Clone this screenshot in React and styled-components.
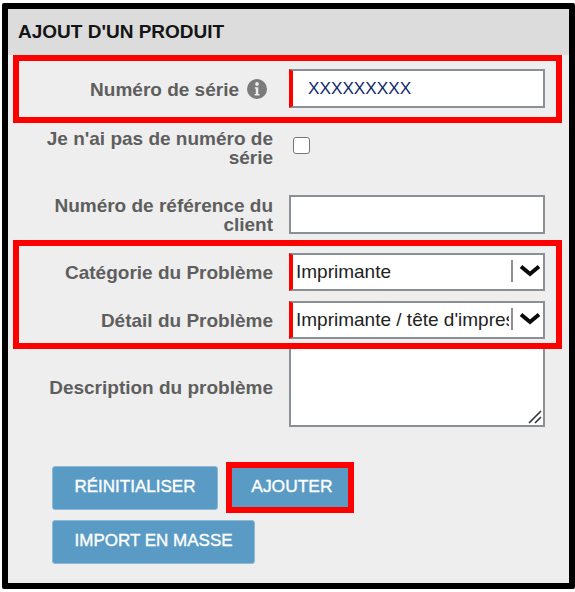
import React from "react";
import styled, { createGlobalStyle } from "styled-components";

const GlobalStyle = createGlobalStyle`
  html, body {
    margin: 0;
    padding: 0;
    background: #fff;
  }
  body {
    padding: 3px 0 0 2px;
    font-family: "Liberation Sans", Arial, sans-serif;
  }
`;

const Panel = styled.div`
  box-sizing: border-box;
  width: 573px;
  height: 586px;
  border: 6px solid #000;
  border-radius: 2px;
  background: #eee;
`;

const Header = styled.h2`
  box-sizing: border-box;
  height: 46px;
  margin: 0;
  padding: 12px 0 0 10px;
  background: #dcdcdc;
  color: #141414;
  font-size: 19px;
  line-height: 21px;
  font-weight: 700;
`;

const Form = styled.form`
  padding: 0 24px 0 33px;
`;

const Highlight = styled.div`
  position: relative;
  z-index: 1;
  margin: ${props => props.$top || 0}px -17px 0 -28px;
  padding: ${props => props.$padding};
  border: 6px solid #f00;
  pointer-events: none;
`;

const Row = styled.div`
  display: grid;
  grid-template-columns: 232px 256px;
  column-gap: 16px;
  align-items: ${props => props.$align || "center"};
  margin-top: ${props => props.$top || 0}px;
`;

const Label = styled.label`
  display: flex;
  justify-content: flex-end;
  align-items: center;
  gap: 8px;
  padding-top: ${props => props.$pad || 0}px;
  color: #5e5e5e;
  font-size: 19px;
  line-height: 19px;
  font-weight: 700;
  text-align: right;
`;

const LabelWithIcon = styled(Label)`
  margin-right: 6px;
  padding-top: 1px;
`;

const TextInput = styled.input`
  box-sizing: border-box;
  width: 256px;
  height: 39px;
  padding: 0 15px;
  border: 2px solid #8b9097;
  border-left: ${props => (props.$required ? "4px solid #f00" : "2px solid #8b9097")};
  border-radius: 0;
  background: #fff;
  color: #10296b;
  font-family: inherit;
  font-size: 17.2px;
  outline: none;
`;

const Check = styled.input`
  appearance: none;
  box-sizing: border-box;
  width: 17px;
  height: 17px;
  margin: 9px 0 0 4px;
  border: 1.5px solid #767676;
  border-radius: 3px;
  background: #fff;
`;

const Select = styled.div`
  box-sizing: border-box;
  display: flex;
  align-items: center;
  width: 256px;
  height: 38px;
  border: 2px solid #8b9097;
  border-left: 4px solid #f00;
  background: #fff;
`;

const SelectValue = styled.span`
  flex: 1;
  min-width: 0;
  margin: 0 2px 0 3px;
  overflow: hidden;
  color: #222;
  font-size: 19px;
  white-space: nowrap;
`;

const SelectCaret = styled.span`
  display: flex;
  align-items: center;
  width: 32px;
  height: 22px;
  margin-bottom: 3px;
  border-left: 2px solid #8b9097;
  padding-left: 6px;
  box-sizing: border-box;
`;

const AreaWrap = styled.div`
  position: relative;
  width: 256px;
  height: 80px;
  margin-top: -2px;
`;

const Area = styled.textarea`
  box-sizing: border-box;
  display: block;
  width: 100%;
  height: 100%;
  border: 2px solid #8b9097;
  border-radius: 0;
  background: #fff;
  resize: none;
  outline: none;
`;

const Grip = styled.svg`
  position: absolute;
  right: 3px;
  bottom: 3px;
`;

const Actions = styled.div`
  display: flex;
  flex-direction: column;
  align-items: flex-start;
  gap: 7px;
  margin: 35px 0 0 11px;
`;

const ButtonRow = styled.div`
  display: flex;
  align-items: center;
  gap: 8px;
`;

const Button = styled.button`
  box-sizing: border-box;
  height: 44px;
  padding: 0 21.5px 2px;
  border: 1px solid #8db9d6;
  border-radius: 3px;
  background: #5a9bc5;
  color: #fff;
  font-family: inherit;
  font-size: 17px;
  -webkit-text-stroke: 0.35px #fff;
  white-space: nowrap;
`;

const OutlinedButton = styled(Button)`
  box-sizing: border-box;
  width: 128px;
  height: 51px;
  padding: 0 0 2px 4px;
  border: 6px solid #f00;
  border-radius: 0;
  font-size: 17.4px;
`;

const InfoIcon = () => (
  <svg width="20" height="20" viewBox="0 0 20 20">
    <circle cx="10" cy="10" r="10" fill="#7b7b7b" />
    <circle cx="10" cy="5" r="1.9" fill="#eee" />
    <path d="M7.8 8.2h3.5v6.8h1.2v1.6H7.6V15h1.2v-5.2H7.8z" fill="#eee" />
  </svg>
);

const Chevron = () => (
  <svg width="22" height="14" viewBox="0 0 22 14">
    <path d="M2 2.5l9 7.5 9-7.5" fill="none" stroke="#0a0a0a" strokeWidth="4" />
  </svg>
);

const App = () => (
  <>
    <GlobalStyle />
    <Panel>
      <Header>AJOUT D'UN PRODUIT</Header>
      <Form>
        <Highlight $padding="8px 11px 9px 22px">
          <Row>
            <LabelWithIcon>
              Numéro de série <InfoIcon />
            </LabelWithIcon>
            <TextInput $required readOnly value="XXXXXXXXX" />
          </Row>
        </Highlight>

        <Row $align="start" $top={5}>
          <Label $pad={1}>Je n'ai pas de numéro de série</Label>
          <div>
            <Check type="checkbox" />
          </div>
        </Row>

        <Row $top={28}>
          <Label>Numéro de référence du client</Label>
          <TextInput />
        </Row>

        <Highlight $padding="7px 11px 4px 22px" $top={6}>
          <Row>
            <Label>Catégorie du Problème</Label>
            <Select>
              <SelectValue>Imprimante</SelectValue>
              <SelectCaret>
                <Chevron />
              </SelectCaret>
            </Select>
          </Row>
          <Row $top={10}>
            <Label>Détail du Problème</Label>
            <Select>
              <SelectValue>Imprimante / tête d'impression</SelectValue>
              <SelectCaret>
                <Chevron />
              </SelectCaret>
            </Select>
          </Row>
        </Highlight>

        <Row $align="start">
          <Label $pad={29}>Description du problème</Label>
          <AreaWrap>
            <Area />
            <Grip width="14" height="14" viewBox="0 0 14 14">
              <path d="M1 13L13 1M7 13l6-6" stroke="#333" strokeWidth="1.6" fill="none" />
            </Grip>
          </AreaWrap>
        </Row>

        <Actions>
          <ButtonRow>
            <Button type="button">RÉINITIALISER</Button>
            <OutlinedButton type="button">AJOUTER</OutlinedButton>
          </ButtonRow>
          <Button type="button">IMPORT EN MASSE</Button>
        </Actions>
      </Form>
    </Panel>
  </>
);

export default App;
